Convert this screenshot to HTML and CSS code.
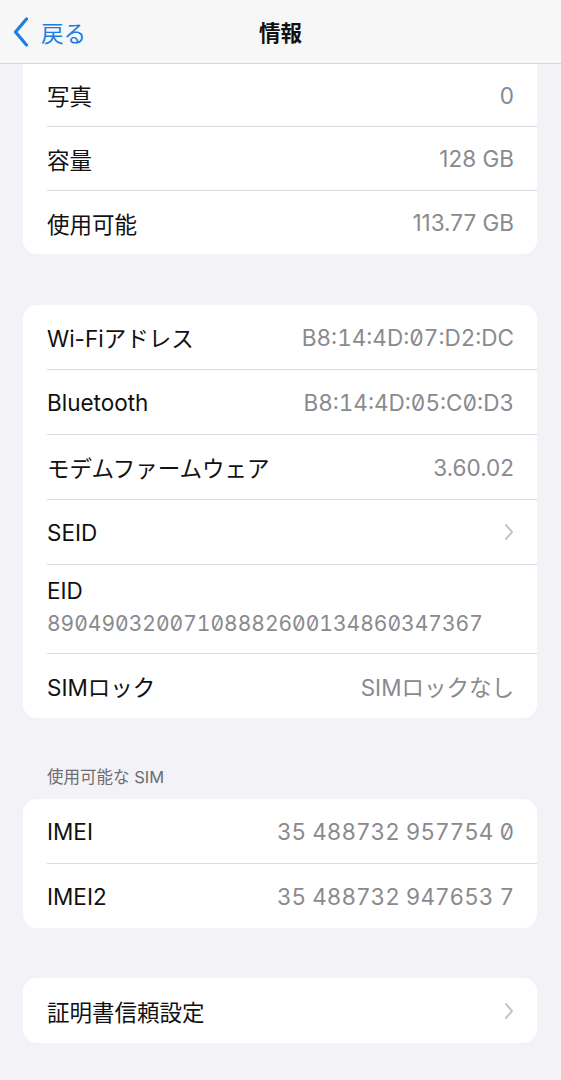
FILE: index.html
```html
<!DOCTYPE html>
<html lang="ja">
<head>
<meta charset="utf-8">
<title>情報</title>
<link rel="stylesheet" href="styles.css">
</head>
<body>
<header class="nav">
  <a class="back">
    <svg class="back-icon" viewBox="0 0 16 30" width="16" height="30"><path d="M13.5 2 L2.5 15 L13.5 28" fill="none" stroke="#1a7fe0" stroke-width="3.2" stroke-linecap="round" stroke-linejoin="round"/></svg>
    <span>戻る</span>
  </a>
  <h1 class="title">情報</h1>
  <span></span>
</header>
<main class="content">
  <section class="card card-top">
    <div class="row"><span class="label">写真</span><span class="value">0</span></div>
    <div class="row"><span class="label">容量</span><span class="value">128 GB</span></div>
    <div class="row"><span class="label">使用可能</span><span class="value">113.77 GB</span></div>
  </section>

  <section class="card gap">
    <div class="row"><span class="label">Wi-Fiアドレス</span><span class="value mono">B8:14:4D:07:D2:DC</span></div>
    <div class="row"><span class="label">Bluetooth</span><span class="value mono">B8:14:4D:05:C0:D3</span></div>
    <div class="row"><span class="label">モデムファームウェア</span><span class="value">3.60.02</span></div>
    <div class="row"><span class="label">SEID</span><svg class="chev" viewBox="0 0 10 18" width="10" height="18"><path d="M2 2 L8 9 L2 16" fill="none" stroke="#c4c4c7" stroke-width="2" stroke-linecap="round" stroke-linejoin="round"/></svg></div>
    <div class="row row-stack"><span class="label">EID</span><span class="value mono eid">89049032007108882600134860347367</span></div>
    <div class="row"><span class="label">SIMロック</span><span class="value">SIMロックなし</span></div>
  </section>

  <h2 class="section-head">使用可能な SIM</h2>
  <section class="card">
    <div class="row"><span class="label">IMEI</span><span class="value mono">35 488732 957754 0</span></div>
    <div class="row"><span class="label">IMEI2</span><span class="value mono">35 488732 947653 7</span></div>
  </section>

  <section class="card card-single gap-small">
    <div class="row"><span class="label">証明書信頼設定</span><svg class="chev" viewBox="0 0 10 18" width="10" height="18"><path d="M2 2 L8 9 L2 16" fill="none" stroke="#c4c4c7" stroke-width="2" stroke-linecap="round" stroke-linejoin="round"/></svg></div>
  </section>
</main>
</body>
</html>
```
FILE: styles.css
```css
html, body {
  margin: 0;
  padding: 0;
}
body {
  background: #f2f2f7;
  font-family: Inter, "Noto Sans CJK JP", sans-serif;
  color: #111;
  width: 561px;
  height: 1080px;
  overflow: hidden;
}
.nav {
  height: 63px;
  border-bottom: 1px solid #d6d6d8;
  background: #f7f7f7;
  display: grid;
  grid-template-columns: 1fr auto 1fr;
  align-items: center;
  padding: 0 13px;
}
.back {
  display: flex;
  align-items: center;
  gap: 12px;
  color: #1a7fe0;
  font-size: 22.5px;
}
.back-icon {
  display: block;
  margin-top: 1px;
}
.title {
  margin: 0;
  font-size: 21.5px;
  font-weight: 700;
  color: #111;
}
.content {
  padding: 0 24px 0 23px;
}
.card {
  background: #fff;
  border-radius: 14px;
  overflow: hidden;
}
.card-top {
  border-top-left-radius: 0;
  border-top-right-radius: 0;
}
.gap {
  margin-top: 51px;
}
.gap-small {
  margin-top: 50px;
}
.row {
  height: 64px;
  margin-left: 24px;
  padding-right: 23px;
  display: flex;
  align-items: center;
  justify-content: space-between;
  font-size: 22.5px;
}
.row + .row {
  border-top: 1px solid #dcdcdf;
}
.card-top > .row {
  height: 63px;
}
.card-top > .row:first-child {
  height: 62px;
}
.card-single > .row {
  height: 65px;
}
.label {
  color: #111;
}
.value {
  color: #8a8a8e;
}
.mono {
  font-feature-settings: "zero" 1, "tnum" 1;
}
.chev {
  display: block;
}
.row-stack {
  height: 89px;
  flex-direction: column;
  align-items: flex-start;
  justify-content: flex-start;
  padding-top: 13px;
  box-sizing: border-box;
  gap: 7px;
}
.row-stack .label,
.row-stack .value {
  line-height: 26px;
}
.eid {
  font-size: 21px;
}
.section-head {
  margin: 0;
  padding: 50px 0 13px 24px;
  font-size: 16.5px;
  line-height: 18px;
  font-weight: 400;
  color: #6d6d72;
}
```
